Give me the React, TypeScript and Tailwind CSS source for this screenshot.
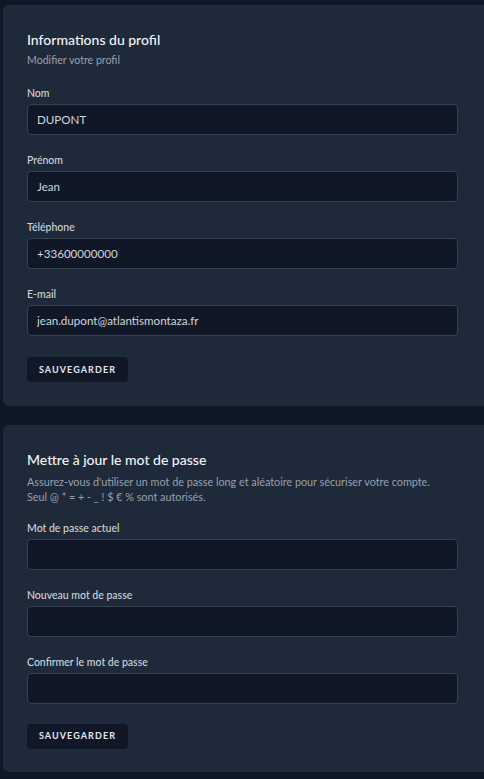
import React from 'react';

interface FieldProps {
    label: string;
    value?: string;
    type?: string;
}

const Field: React.FC<FieldProps> = ({ label, value, type = 'text' }) => (
    <div className="flex flex-col">
        <label className="text-[10.5px] leading-[14px] font-medium text-gray-300">{label}</label>
        <input
            type={type}
            defaultValue={value}
            className="mt-[4px] h-[31px] w-full rounded-[4px] border border-gray-700 bg-gray-900 px-[9px] text-[11.6px] text-gray-300 outline-none"
        />
    </div>
);

const SaveButton: React.FC = () => (
    <div>
        <button className="h-[25px] w-[101px] rounded-[4px] bg-gray-900 text-[9px] font-bold uppercase tracking-[0.12em] text-gray-200">
            Sauvegarder
        </button>
    </div>
);

const App: React.FC = () => {
    return (
        <div className="min-h-[779px] w-[484px] overflow-hidden bg-gray-900 pt-[5px] pl-[3px] font-['Lato','Noto_Sans',sans-serif]">
            {/* Profil */}
            <section className="rounded-l-[6px] bg-gray-800 pt-[25px] pb-[24px] pl-[24px] pr-[26px]">
                <h3 className="text-[14px] leading-[20px] font-medium text-gray-100">Informations du profil</h3>
                <p className="mt-[3px] text-[10.6px] leading-[14px] text-gray-400">Modifier votre profil</p>

                <div className="mt-[19px] flex flex-col gap-[18px]">
                    <Field label="Nom" value="DUPONT" />
                    <Field label="Prénom" value="Jean" />
                    <Field label="Téléphone" value="+33600000000" />
                    <Field label="E-mail" value="jean.dupont@atlantismontaza.fr" type="email" />
                </div>

                <div className="mt-[19px]">
                    <SaveButton />
                </div>
            </section>

            {/* Mot de passe */}
            <section className="mt-[19px] rounded-l-[6px] bg-gray-800 pt-[25px] pb-[23px] pl-[24px] pr-[26px]">
                <h3 className="text-[14px] leading-[20px] font-medium text-gray-100">Mettre à jour le mot de passe</h3>
                <p className="mt-[4px] text-[10.8px] leading-[15px] text-gray-400">
                    Assurez-vous d'utiliser un mot de passe long et aléatoire pour sécuriser votre compte.
                    <br />
                    Seul @ * = + - _ ! $ € % sont autorisés.
                </p>

                <div className="mt-[17px] flex flex-col gap-[18px]">
                    <Field label="Mot de passe actuel" type="password" />
                    <Field label="Nouveau mot de passe" type="password" />
                    <Field label="Confirmer le mot de passe" type="password" />
                </div>

                <div className="mt-[17px]">
                    <SaveButton />
                </div>
            </section>
        </div>
    );
};

export default App;
